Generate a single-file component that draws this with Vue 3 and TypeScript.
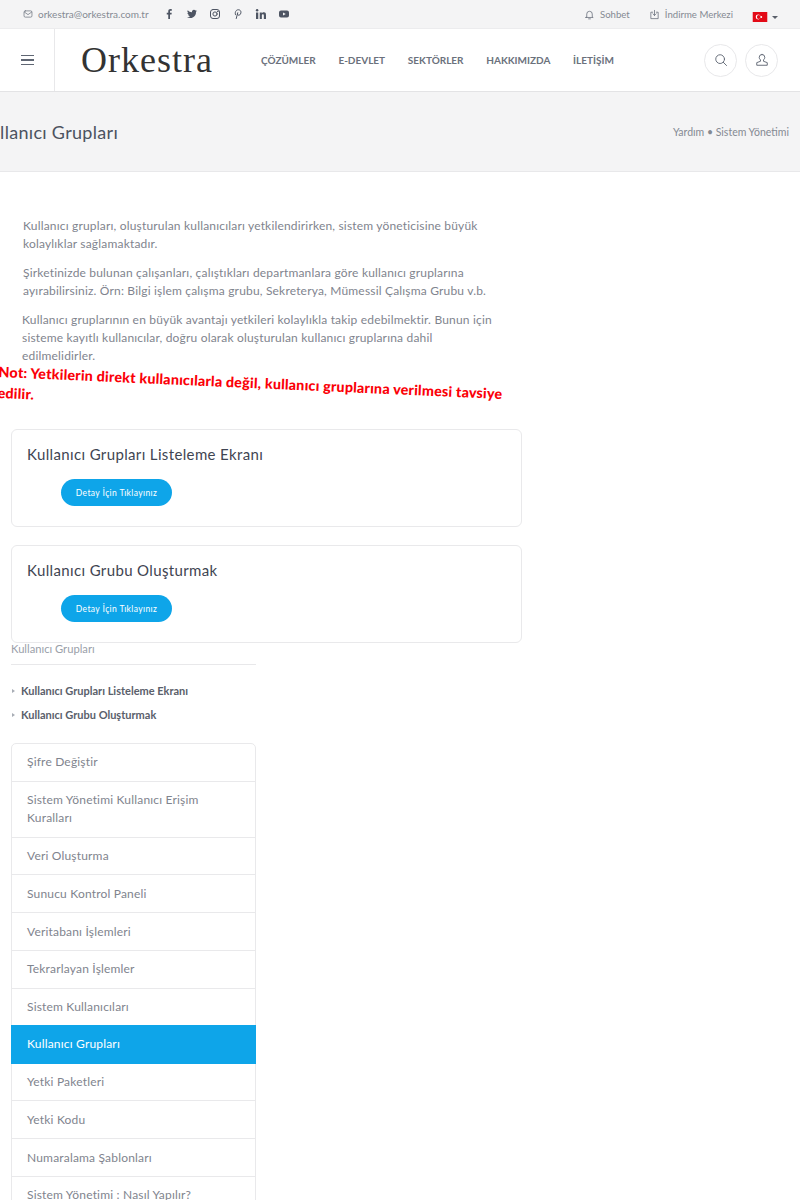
<template>
  <div class="page">
    <div class="topbar">
      <div class="topbar__left">
        <svg class="ico mail" viewBox="0 0 24 24"><rect x="2.500" y="4.500" width="19" height="15" rx="3" /><path d="M3.500 7.500l8.500 6 8.500-6" /></svg>
        <span class="topbar__email">orkestra@orkestra.com.tr</span>
        <div class="social">
          <svg viewBox="0 0 24 24"><path d="M14 22v-9h3l.5-3.600H14V7.200c0-1 .3-1.700 1.800-1.700h1.800V2.300C17.200 2.200 16.200 2 15 2c-2.700 0-4.500 1.600-4.500 4.600v2.800H7.500V13h3v9z" /></svg>
          <svg viewBox="0 0 24 24"><path d="M22 5.500c-.7.3-1.500.5-2.300.6.800-.5 1.500-1.300 1.800-2.200-.8.500-1.700.8-2.600 1A4.100 4.100 0 0 0 11.900 8.600 11.600 11.600 0 0 1 3.400 4.400a4.100 4.100 0 0 0 1.300 5.500c-.7 0-1.300-.2-1.900-.5 0 2 1.400 3.700 3.300 4.100-.6.200-1.200.2-1.800.1.500 1.600 2 2.800 3.800 2.800A8.300 8.300 0 0 1 2 18.100 11.600 11.600 0 0 0 20 7.700c.8-.6 1.500-1.300 2-2.200z" /></svg>
          <svg class="line" viewBox="0 0 24 24"><rect x="3" y="3" width="18" height="18" rx="5" /><circle cx="12" cy="12" r="4.200" /><circle cx="17.200" cy="6.800" r=".6" /></svg>
          <svg class="line" viewBox="0 0 24 24"><path d="M8.500 21l3-11.500M7 13.500C5 9 8 3.500 12.500 3.500c4 0 6 3 5.300 6.200-.7 3.300-3 5.300-5.200 4.600-1-.3-1.500-1-1.700-1.800" /></svg>
          <svg viewBox="0 0 24 24"><rect x="2" y="9" width="4.500" height="13" /><circle cx="4.200" cy="4.500" r="2.500" /><path d="M9.500 9h4.200v1.800c.6-1.100 2-2.200 4-2.200 3.800 0 4.300 2.500 4.300 5.700V22h-4.300v-6.600c0-1.600-.3-3-2-3s-2 1.400-2 3V22H9.500z" /></svg>
          <svg viewBox="0 0 24 24"><path fill-rule="evenodd" d="M6 5h12a4 4 0 0 1 4 4v6a4 4 0 0 1-4 4H6a4 4 0 0 1-4-4V9a4 4 0 0 1 4-4zm4 4v6l5.500-3z" /></svg>
        </div>
      </div>
      <div class="topbar__right">
        <span class="tool">
          <svg class="ico" viewBox="0 0 24 24"><path d="M6 17V11a6 6 0 0 1 12 0v6l2 1.500H4zM10 21.500h4" /></svg>
          Sohbet
        </span>
        <span class="tool tool--dl">
          <svg class="ico" viewBox="0 0 24 24"><path d="M8 7H4v14h16V7h-4M12 3v11M8.500 10.500L12 14l3.500-3.500" /></svg>
          İndirme Merkezi
        </span>
        <span class="lang">
          <svg class="flag" viewBox="0 0 16 11"><rect width="16" height="11" fill="#e30a17" /><circle cx="6" cy="5.500" r="2.700" fill="#fff" /><circle cx="6.700" cy="5.500" r="2.100" fill="#e30a17" /><circle cx="9.400" cy="5.500" r="1" fill="#fff" /></svg>
          <i class="caret"></i>
        </span>
      </div>
    </div>

    <header class="header">
      <div class="burger"><span></span><span></span><span></span></div>
      <div class="logo">Orkestra</div>
      <nav class="nav">
        <a v-for="item in navItems" :key="item">{{ item }}</a>
      </nav>
      <div class="header__actions">
        <button class="round" type="button" aria-label="Ara">
          <svg class="ico" viewBox="0 0 24 24"><circle cx="10.500" cy="10.500" r="7.500" /><path d="M16 16l5.500 5.500" /></svg>
        </button>
        <button class="round" type="button" aria-label="Hesap">
          <svg class="ico" viewBox="0 0 24 24"><path d="M12 2.500a4.800 4.800 0 0 0-4.800 4.800c0 2 .9 3.400 2.200 4.500v2.400L3 16.500v4.500h18v-4.500l-6.400-2.300v-2.400c1.300-1.100 2.200-2.500 2.200-4.500A4.800 4.800 0 0 0 12 2.500z" /></svg>
        </button>
      </div>
    </header>

    <div class="titlebar">
      <h1>Kullanıcı Grupları</h1>
      <div class="crumbs">Yardım • Sistem Yönetimi</div>
    </div>

    <main class="content">
      <p class="p1">Kullanıcı grupları, oluşturulan kullanıcıları yetkilendirirken, sistem yöneticisine büyük kolaylıklar sağlamaktadır.</p>
      <p class="p1">Şirketinizde bulunan çalışanları, çalıştıkları departmanlara göre kullanıcı gruplarına ayırabilirsiniz. Örn: Bilgi işlem çalışma grubu, Sekreterya, Mümessil Çalışma Grubu v.b.</p>
      <p class="p2">Kullanıcı gruplarının en büyük avantajı yetkileri kolaylıkla takip edebilmektir. Bunun için sisteme kayıtlı kullanıcılar, doğru olarak oluşturulan kullanıcı gruplarına dahil edilmelidirler.</p>
      <p class="note">Not: Yetkilerin direkt kullanıcılarla değil, kullanıcı gruplarına verilmesi tavsiye edilir.</p>

      <section v-for="card in cards" :key="card" class="card">
        <h3>{{ card }}</h3>
        <a class="btn">Detay İçin Tıklayınız</a>
      </section>

      <aside class="side">
        <div class="side__title">Kullanıcı Grupları</div>
        <ul class="links">
          <li v-for="card in cards" :key="card">{{ card }}</li>
        </ul>
        <ul class="menu">
          <li v-for="m in menu" :key="m" :class="{ active: m === 'Kullanıcı Grupları' }">{{ m }}</li>
        </ul>
      </aside>
    </main>
  </div>
</template>

<script setup lang="ts">
const navItems: string[] = ['ÇÖZÜMLER', 'E-DEVLET', 'SEKTÖRLER', 'HAKKIMIZDA', 'İLETİŞİM'];

const cards: string[] = ['Kullanıcı Grupları Listeleme Ekranı', 'Kullanıcı Grubu Oluşturmak'];

const menu: string[] = [
  'Şifre Değiştir',
  'Sistem Yönetimi Kullanıcı Erişim Kuralları',
  'Veri Oluşturma',
  'Sunucu Kontrol Paneli',
  'Veritabanı İşlemleri',
  'Tekrarlayan İşlemler',
  'Sistem Kullanıcıları',
  'Kullanıcı Grupları',
  'Yetki Paketleri',
  'Yetki Kodu',
  'Numaralama Şablonları',
  'Sistem Yönetimi : Nasıl Yapılır?',
];
</script>

<style>
html,
body {
  background: #fff;
  overflow: hidden;
}
</style>

<style scoped>
.page {
  width: 800px;
  height: 1200px;
  overflow: hidden;
  font-family: Lato, 'Noto Sans', sans-serif;
  color: #6b7280;
}
svg {
  display: block;
}
.ico {
  width: 14px;
  height: 14px;
  fill: none;
  stroke: #5f6673;
  stroke-width: 1.600;
  stroke-linecap: round;
  stroke-linejoin: round;
}
.topbar {
  height: 29px;
  box-sizing: border-box;
  background: #f4f4f5;
  border-bottom: 1px solid #ececee;
  display: flex;
  align-items: center;
  justify-content: space-between;
  padding: 0 22px 0 23px;
  font-size: 10px;
  color: #858a93;
}
.topbar__left {
  display: flex;
  align-items: center;
}
.mail {
  width: 10px;
  height: 10px;
}
.topbar__email {
  margin-left: 5px;
}
.social {
  display: flex;
  align-items: center;
  gap: 11px;
  margin-left: 14px;
}
.social svg {
  width: 12px;
  height: 12px;
  fill: #4e5563;
}
.social svg.line {
  fill: none;
  stroke: #4e5563;
  stroke-width: 2;
  stroke-linecap: round;
}
.topbar__right {
  display: flex;
  align-items: center;
}
.tool {
  display: flex;
  align-items: center;
  gap: 5px;
  font-size: 9.600px;
}
.tool .ico {
  width: 11px;
  height: 11px;
}
.tool--dl {
  margin-left: 19px;
}
.lang {
  display: flex;
  align-items: center;
  gap: 4px;
  margin: 6px 0 0 19px;
}
.flag {
  width: 16px;
  height: 10px;
}
.caret {
  border: 3px solid transparent;
  border-top-color: #5a606b;
  border-bottom: 0;
}
.header {
  height: 63px;
  box-sizing: border-box;
  background: #fff;
  border-bottom: 1px solid #e3e3e5;
  display: flex;
  align-items: stretch;
}
.burger {
  width: 55px;
  box-sizing: border-box;
  border-right: 1px solid #e8e8ea;
  display: flex;
  flex-direction: column;
  justify-content: center;
  align-items: center;
  gap: 3px;
}
.burger span {
  width: 13px;
  height: 1.500px;
  background: #5f6673;
}
.logo {
  width: 179px;
  padding-left: 26px;
  box-sizing: border-box;
  align-self: center;
  font-family: 'Liberation Serif', serif;
  font-size: 36px;
  letter-spacing: 1px;
  color: #333;
  white-space: nowrap;
}
.nav {
  display: flex;
  align-items: center;
  gap: 22.700px;
  margin-left: 27px;
  font-size: 10px;
  font-weight: 700;
  color: #6b717c;
}
.header__actions {
  margin-left: auto;
  display: flex;
  align-items: center;
  gap: 8px;
  padding-right: 22px;
}
.round {
  width: 33px;
  height: 33px;
  border: 1px solid #e8e8ea;
  border-radius: 50%;
  background: #fff;
  padding: 0;
  display: flex;
  align-items: center;
  justify-content: center;
}
.titlebar {
  height: 80px;
  box-sizing: border-box;
  background: #f4f4f5;
  border-bottom: 1px solid #e8e8ea;
  display: flex;
  align-items: center;
  justify-content: space-between;
  padding: 0 11px 0 0;
}
.titlebar h1 {
  margin: 0 0 0 -22px;
  font-size: 18px;
  font-weight: 400;
  color: #4c5360;
  letter-spacing: 0.3px;
}
.crumbs {
  font-size: 10.500px;
  color: #858a93;
}
.content {
  padding-top: 45px;
}
.p1,
.p2 {
  width: 478px;
  margin: 0 0 11px 23px;
  font-size: 12px;
  line-height: 18px;
  letter-spacing: 0.180px;
  color: #7f848e;
}
.p2 {
  width: 480px;
  margin-left: 22px;
  margin-bottom: 0;
}
.note {
  width: 530px;
  margin: -4px 0 26px -1px;
  font-size: 14.300px;
  font-weight: 900;
  line-height: 21px;
  letter-spacing: 0.200px;
  color: #fb0007;
  transform: rotate(2.500deg);
  transform-origin: left top;
}
.card {
  width: 511px;
  height: 98px;
  box-sizing: border-box;
  margin: 0 0 18px 11px;
  padding: 14px 15px;
  border: 1px solid #e9e9eb;
  border-radius: 6px;
}
.card:last-of-type {
  margin-bottom: 0;
}
.card h3 {
  margin: 0;
  font-size: 15px;
  line-height: 20px;
  font-weight: 400;
  color: #3f4552;
  letter-spacing: 0.360px;
}
.btn {
  display: flex;
  align-items: center;
  justify-content: center;
  width: 111px;
  height: 27px;
  margin: 15px 0 0 34px;
  border-radius: 14px;
  background: #0ea5e9;
  color: #fff;
  font-size: 8.500px;
  letter-spacing: 0.4px;
}
.side {
  width: 245px;
  margin: -1px 0 0 11px;
}
.side__title {
  font-size: 11.200px;
  line-height: 14px;
  color: #9aa0a9;
  padding-bottom: 8px;
  border-bottom: 1px solid #e8e8ea;
}
.links {
  list-style: none;
  margin: 14px 0 0;
  padding: 0;
}
.links li {
  position: relative;
  padding-left: 10px;
  font-size: 11px;
  line-height: 24px;
  font-weight: 700;
  color: #5a606b;
}
.links li::before {
  content: '';
  position: absolute;
  left: 1px;
  top: 10px;
  border: 2.500px solid transparent;
  border-left: 3px solid #a8adb5;
  border-right: 0;
}
.menu {
  list-style: none;
  margin: 16px 0 0;
  padding: 0;
  border: 1px solid #e9e9eb;
  border-radius: 5px 5px 0 0;
}
.menu li {
  padding: 9.500px 15px 9.250px;
  font-size: 12px;
  line-height: 18px;
  letter-spacing: 0.180px;
  color: #7f848e;
  border-bottom: 1px solid #e9e9eb;
}
.menu li:first-child {
  padding-top: 9px;
  padding-bottom: 9.750px;
}
.menu li.active {
  background: #0ea5e9;
  color: #fff;
  margin: -1px -1px 0;
  padding-top: 10px;
  padding-left: 16px;
  border-bottom-color: #0ea5e9;
}
</style>
